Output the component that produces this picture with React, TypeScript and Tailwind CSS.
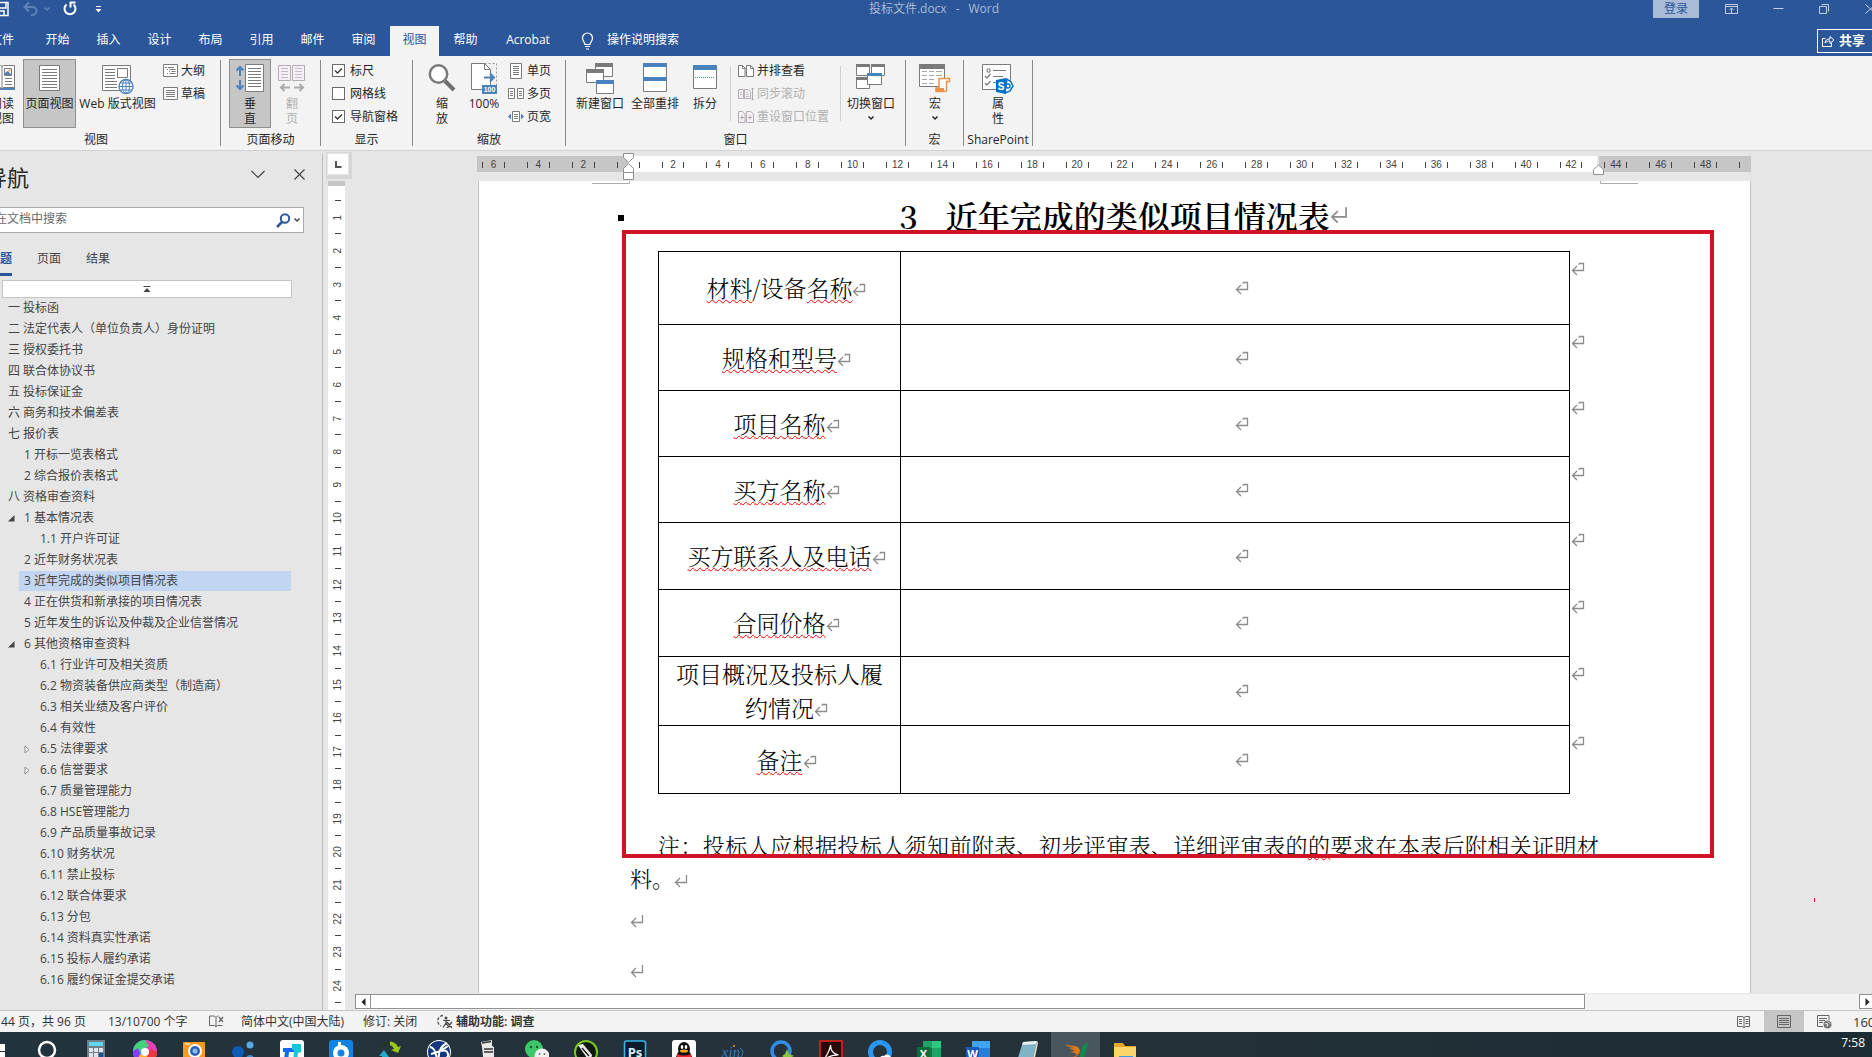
import React from "react";
import type { ReactNode } from "react";

const UI = "font-['Open_Sans','Noto_Sans_CJK_SC',sans-serif]";
const DOC = "font-['Noto_Serif_CJK_SC','Liberation_Serif','Noto_Sans_CJK_SC',serif]";

/* ---------- small shared glyphs ---------- */

function Chevron({ className = "" }: { className?: string }) {
  return (
    <svg width="8" height="6" viewBox="0 0 8 6" className={className} aria-hidden="true">
      <path d="M1.5 1.5L4 4l2.5-2.5" fill="none" stroke="currentColor" strokeWidth="1.5" />
    </svg>
  );
}

function CellMark({ className = "" }: { className?: string }) {
  return (
    <svg width="14" height="14" viewBox="0 0 14 14" className={className} aria-hidden="true">
      <path d="M8 1.5h4.500v7H2M6 4L1.500 8.500 6 13" fill="none" stroke="#8c8c8c" strokeWidth="1.300" />
      <path d="M8 1.500v1.500" stroke="#8c8c8c" strokeWidth="1" />
    </svg>
  );
}

function ParaMark({ size = 14 }: { size?: number }) {
  return (
    <svg width={size} height={size} viewBox="0 0 14 14" className="inline-block" aria-hidden="true">
      <path d="M12.500 1v7.500H2M6 4L1.500 8.500 6 13" fill="none" stroke="#8c8c8c" strokeWidth="1.300" />
    </svg>
  );
}

/* ---------- ribbon icons ---------- */

const G = "#7a7a7a";
const B = "#4a82bd";

const IconRead = () => (
  <svg width="30" height="32" viewBox="0 0 30 32" aria-hidden="true">
    <path d="M3 4h25v23H3z" fill={B} />
    <path d="M1.500 2.500h12l1.500 1 1.500-1h11v22h-11l-1.500 1.500-1.500-1.500h-12z" fill="#fff" stroke={G} />
    <path d="M17.500 5.500h7v7h-7z" fill="#fff" stroke={G} />
    <path d="M18 12v-2l2.500-2 3.500 3v1z" fill={B} />
    <circle cx="22.500" cy="7.500" r="1" fill="#e8914a" />
    <path d="M15 3v22M18 15.500h7M18 18.500h7M18 21.500h7" stroke={G} />
  </svg>
);

const IconPage = () => (
  <svg width="22" height="32" viewBox="0 0 22 32" aria-hidden="true">
    <path d="M.5 2.500h20v25H.5z" fill="#fff" stroke={G} />
    <path d="M3 6.500h15M3 9.500h15M3 12.500h15M3 15.500h15M3 18.500h15M3 21.500h15M3 24.500h15" stroke={G} />
  </svg>
);

const IconWeb = () => (
  <svg width="32" height="32" viewBox="0 0 32 32" aria-hidden="true">
    <path d="M.5 2.500h28v25H.5z" fill="#fff" stroke={G} />
    <path d="M15.500 5.500h10v9h-10z" fill="#fff" stroke={G} />
    <path d="M3 6.500h10M3 9.500h10M3 12.500h10M3 15.500h10M3 18.500h12M3 21.500h12M3 24.500h12" stroke={G} />
    <circle cx="24" cy="23.500" r="7" fill="#fff" stroke={B} strokeWidth="1.300" />
    <path d="M17 23.500h14M24 16.500v14M18 20h12M18 27h12" stroke={B} strokeWidth="1" />
    <ellipse cx="24" cy="23.500" rx="3.500" ry="7" fill="none" stroke={B} />
  </svg>
);

const IconOutline = () => (
  <svg width="15" height="14" viewBox="0 0 15 14" aria-hidden="true">
    <path d="M.5.5h14v12H.5z" fill="#fff" stroke={G} />
    <path d="M2 3.500h2M5 3.500h6M4 5.500h1M6.500 5.500h6M6 7.500h1M8.500 7.500h4M4 9.500h1M6.500 9.500h6" stroke={G} />
  </svg>
);

const IconDraft = () => (
  <svg width="15" height="14" viewBox="0 0 15 14" aria-hidden="true">
    <path d="M.5.5h14v12H.5z" fill="#fff" stroke={G} />
    <path d="M3 3.500h9M3 5.500h9M3 7.500h9M3 9.500h9" stroke={G} />
  </svg>
);

const IconVertical = () => (
  <svg width="30" height="32" viewBox="0 0 30 32" aria-hidden="true">
    <path d="M10.500 1.500h18v27h-18z" fill="#fff" stroke={G} />
    <path d="M13 5.500h13M13 8.500h13M13 11.500h13M13 14.500h13M13 17.500h13M13 20.500h13M13 23.500h13" stroke={G} />
    <path d="M5 4v9M1.500 7.500L5 4l3.500 3.500M5 17v9M1.500 22.500L5 26l3.500-3.500" fill="none" stroke={B} strokeWidth="2" />
  </svg>
);

const IconFlip = () => (
  <svg width="28" height="32" viewBox="0 0 28 32" aria-hidden="true">
    <path d="M.5 2.500h12v15H.5zM14.500 2.500h12v15h-12z" fill="#f5f0f5" stroke="#b5abb5" />
    <path d="M3 5.500h7M3 8.500h7M3 11.500h7M3 14.500h7M17 5.500h7M17 8.500h7M17 11.500h7M17 14.500h7" stroke="#c4bcc4" />
    <path d="M12 24.500H3M6.500 21L3 24.500 6.500 28M16 24.500h9M21.500 21l3.500 3.500-3.500 3.500" fill="none" stroke="#aaa" strokeWidth="2" />
  </svg>
);

const IconZoom = () => (
  <svg width="28" height="32" viewBox="0 0 28 32" aria-hidden="true">
    <path d="M17 18l9 9" stroke="#6f6f6f" strokeWidth="4" />
    <circle cx="10.500" cy="11" r="8.700" fill="#fff" stroke={G} strokeWidth="2.500" />
  </svg>
);

const IconHundred = () => (
  <svg width="28" height="32" viewBox="0 0 28 32" aria-hidden="true">
    <path d="M1.500.5h13l6 6v20h-19z" fill="#fff" stroke={G} />
    <path d="M14.500.500h12v22" fill="none" stroke="#999" strokeDasharray="2 2" />
    <path d="M14.500.5v6h6" fill="none" stroke={G} />
    <path d="M14 14.500h10M20 10.500l4 4-4 4" fill="none" stroke={B} strokeWidth="2" />
    <path d="M12 22h15v9H12z" fill={B} />
    <text x="19.500" y="29" textAnchor="middle" fontSize="7" fontWeight="700" fill="#fff" fontFamily="Liberation Sans">100</text>
  </svg>
);

const IconOne = () => (
  <svg width="16" height="16" viewBox="0 0 16 16" aria-hidden="true">
    <path d="M2.500.5h11v15h-11z" fill="#fff" stroke={G} />
    <path d="M5 3.500h6M5 5.500h6M5 7.500h6M5 9.500h6M5 11.500h6" stroke={G} />
  </svg>
);

const IconMany = () => (
  <svg width="16" height="16" viewBox="0 0 16 16" aria-hidden="true">
    <path d="M.5 2.500h6v10h-6zM9.500 2.500h6v10h-6z" fill="#fff" stroke={G} />
    <path d="M2 5.500h3M2 7.500h3M2 9.500h3M11 5.500h3M11 7.500h3M11 9.500h3" stroke={G} />
  </svg>
);

const IconWidth = () => (
  <svg width="16" height="16" viewBox="0 0 16 16" aria-hidden="true">
    <path d="M4.500 2.500h7v10h-7z" fill="#fff" stroke={G} />
    <path d="M6 5.500h4M6 7.500h4M6 9.500h4" stroke={G} />
    <path d="M3 4.500v6l-3-3zM13 4.500v6l3-3z" fill={B} />
  </svg>
);

const IconNewWin = () => (
  <svg width="28" height="32" viewBox="0 0 28 32" aria-hidden="true">
    <path d="M9.500.5h17v13h-17z" fill="#fff" stroke={G} />
    <path d="M9 0h18v4H9z" fill={G} />
    <path d="M.5 6.500h17v13H.5z" fill="#fff" stroke={G} />
    <path d="M0 6h18v4H0z" fill={G} />
    <path d="M10.500 17.500h17v13h-17z" fill="#fff" stroke={G} />
    <path d="M10 17h18v4H10z" fill={B} />
  </svg>
);

const IconArrange = () => (
  <svg width="24" height="32" viewBox="0 0 24 32" aria-hidden="true">
    <path d="M.5.5h23v28H.500z" fill="#fff" stroke={G} />
    <path d="M0 0h24v4H0zM0 14h24v4H0z" fill={B} />
  </svg>
);

const IconSplit = () => (
  <svg width="24" height="32" viewBox="0 0 24 32" aria-hidden="true">
    <path d="M.5 2.500h23v23H.5z" fill="#fff" stroke={G} />
    <path d="M0 2h24v5H0z" fill={B} />
    <path d="M2 14.500h20" stroke={B} strokeDasharray="1 1" />
  </svg>
);

const IconSide = () => (
  <svg width="16" height="14" viewBox="0 0 16 14" aria-hidden="true">
    <path d="M.5 1.500h4l2.500 2.500v8.500H.5zM8.500 1.500h4L15.500 4v8.500h-7z" fill="#fff" stroke={G} />
    <path d="M4.500 1.500v3h2.500M12.500 1.500v3h3" fill="none" stroke={G} />
  </svg>
);

const IconSync = () => (
  <svg width="16" height="14" viewBox="0 0 16 14" aria-hidden="true">
    <path d="M.5 2.500h5v9h-5zM6.500 2.500h4l2 2v7h-6z" fill="#f5f0f5" stroke="#b5abb5" />
    <path d="M2 5.500h2M2 7.500h2M8 5.500h2M8 7.500h3M8 9.500h3" stroke="#c4bcc4" />
    <path d="M14.500 1v12M13 2.500L14.500 1 16 2.500M13 11.500l1.500 1.500 1.500-1.500" fill="none" stroke="#aaa" />
  </svg>
);

const IconReset = () => (
  <svg width="16" height="14" viewBox="0 0 16 14" aria-hidden="true">
    <path d="M.5 1.500h4l2.500 2.500v8.500H.5zM8.500 1.500h4L15.500 4v8.500h-7z" fill="#f5f0f5" stroke="#b5abb5" />
    <path d="M2 7.500h4M4 5.500v4M10 7.500h4M12 5.500v4" stroke="#aaa" />
  </svg>
);

const IconSwitch = () => (
  <svg width="30" height="32" viewBox="0 0 30 32" aria-hidden="true">
    <path d="M.5 1.500h13v11H.5zM15.500 1.500h13v11h-13zM.5 14.500h13v11H.5z" fill="#fff" stroke={G} />
    <path d="M0 1h14v3H0zM15 1h14v3H15zM0 14h14v3H0z" fill={G} />
    <path d="M11.500 10.500h14v11h-14z" fill="#fff" stroke={G} />
    <path d="M11 10h15v3H11z" fill={B} />
  </svg>
);

const IconMacro = () => (
  <svg width="32" height="32" viewBox="0 0 32 32" aria-hidden="true">
    <path d="M.5 1.500h25v22H.5z" fill="#fff" stroke={G} />
    <path d="M0 1h26v5H0z" fill={G} />
    <path d="M3 8.500h5M10 8.500h5M17 8.500h6M3 12.500h5M10 12.500h5M17 12.500h6M3 16.500h5M10 16.500h5M3 20.500h5M10 20.500h5" stroke="#a8a8a8" />
    <path d="M20 15.500h10.500v3h-3V27a1.500 1.500 0 0 1-1.500 1.500h-9V25h3z" fill="#fff" stroke="#e8914a" strokeWidth="1.500" />
    <path d="M17 25h8v3h-8z" fill="#e8914a" />
  </svg>
);

const IconProps = () => (
  <svg width="32" height="32" viewBox="0 0 32 32" aria-hidden="true">
    <path d="M.5 1.500h28v25H.5z" fill="#fff" stroke={G} />
    <path d="M5 6h3v3H5z" fill="none" stroke={G} />
    <path d="M11 7.500h13M11 13.500h10M3 13l2 2 3.500-4M3 20l2 2 3.500-4M11 19.500h4" fill="none" stroke={G} strokeWidth="1.200" />
    <path d="M25 16l4 3 2 4-3 5-5 2z" fill="#fff" stroke="#0072c6" strokeWidth="1.500" />
    <circle cx="26" cy="23" r="2" fill="#fff" stroke="#0072c6" strokeWidth="1.500" />
    <path d="M14 17l10-2v16l-10-2z" fill="#0072c6" />
    <text x="19" y="26.500" textAnchor="middle" fontSize="10" fontWeight="700" fill="#fff" fontFamily="Liberation Sans">S</text>
  </svg>
);

/* ---------- ribbon building blocks ---------- */

function BigButton({ icon, label, className, active, disabled, menu }: {
  icon: ReactNode; label: ReactNode; className: string; active?: boolean; disabled?: boolean; menu?: boolean;
}) {
  const state = active ? "border-[#8f8f8f] bg-[#c6c6c6]" : "border-transparent";
  return (
    <button
      type="button"
      disabled={disabled}
      className={`flex h-[69px] shrink-0 flex-col items-center border pt-[3px] leading-[15px] whitespace-nowrap ${state} ${disabled ? "text-[#b1b1b1]" : ""} ${className}`}
    >
      <span className="mb-px flex h-8 items-start">{icon}</span>
      <span>{label}</span>
      {menu && <Chevron className="mt-1" />}
    </button>
  );
}

function SmallButton({ icon, label, disabled }: { icon: ReactNode; label: string; disabled?: boolean }) {
  return (
    <button type="button" disabled={disabled} className={`flex h-[23px] items-center gap-[3px] whitespace-nowrap ${disabled ? "text-[#b1b1b1]" : ""}`}>
      {icon}
      <span>{label}</span>
    </button>
  );
}

function Check({ label, on }: { label: string; on?: boolean }) {
  return (
    <label className="flex h-[23px] items-center gap-[5px] whitespace-nowrap">
      <span className="relative flex size-[13px]">
        <input type="checkbox" defaultChecked={on} className="peer size-[13px] appearance-none border border-[#6a6a6a] bg-white" />
        <svg viewBox="0 0 13 13" className="pointer-events-none absolute inset-0 hidden peer-checked:block" aria-hidden="true">
          <path d="M3 6.500l2.500 2.500L10 4.500" fill="none" stroke="#333" strokeWidth="1.300" />
        </svg>
      </span>
      {label}
    </label>
  );
}

function Group({ label, className, children }: { label: string; className: string; children: ReactNode }) {
  return (
    <>
      <section aria-label={label} className={`shrink-0 pt-[3px] ${className}`}>
        <div className="flex h-[69px]">{children}</div>
        <div className="mt-[3px] text-center leading-[18px] whitespace-nowrap">{label}</div>
      </section>
      <div className="my-1 w-px shrink-0 bg-[#8a8a8a]" />
    </>
  );
}

const tabs = ["开始", "插入", "设计", "布局", "引用", "邮件", "审阅", "视图", "帮助", "Acrobat"];

function TitleArea() {
  return (
    <header className="h-14 shrink-0 bg-[#2b579a] text-white">
      <div className="grid h-[18px] grid-cols-[1fr_auto_1fr]">
        <div className="flex items-center">
          <button type="button" aria-label="保存" className="-ml-[5px]">
            <svg width="14" height="18" viewBox="0 0 14 18"><path d="M1 2.500h12v13H1zM3 3v5h8V3M4 15v-4h5v4" fill="none" stroke="#fff" strokeWidth="1.500" /></svg>
          </button>
          <button type="button" aria-label="撤消" className="ml-[14px]">
            <svg width="16" height="18" viewBox="0 0 16 18"><path d="M2 7h7.500a4 4 0 0 1 0 8H8M6 2.500L1.500 7 6 11.500" fill="none" stroke="#5f82b8" strokeWidth="2" /></svg>
          </button>
          <Chevron className="ml-1 text-[#5f82b8]" />
          <button type="button" aria-label="重复" className="ml-[11px]">
            <svg width="16" height="18" viewBox="0 0 16 18"><path d="M4.500 4.500a5.500 5.500 0 1 0 7 0M8 2.500h5.500M8.500 2v5.500" fill="none" stroke="#fff" strokeWidth="2" /></svg>
          </button>
          <button type="button" aria-label="自定义快速访问工具栏" className="ml-[17px]">
            <svg width="7" height="18" viewBox="0 0 7 18"><path d="M1 6.500h5" stroke="#fff" /><path d="M.5 9h6l-3 3.500z" fill="#fff" /></svg>
          </button>
        </div>
        <div className="flex gap-[9px] pr-1 leading-[18px] text-[#a9b9d4]">
          <span>投标文件.docx</span>
          <span>-</span>
          <span>Word</span>
        </div>
        <div className="flex justify-end text-[#c0cce0]">
          <button type="button" className="mr-[26px] h-[18px] w-[46px] rounded-b-[1px] bg-[#a9bbd6] leading-[18px] text-[#2b579a]">登录</button>
          <button type="button" aria-label="功能区显示选项" className="mr-[34px]">
            <svg width="14" height="12" viewBox="0 0 14 12"><path d="M.5 1.500h12v9H.5zM.500 3.500h12M6.500 10V5M4.500 7l2-2 2 2" fill="none" stroke="currentColor" /></svg>
          </button>
          <button type="button" aria-label="最小化" className="mr-[35px]">
            <svg width="11" height="12" viewBox="0 0 11 12"><path d="M.5 5.500h10" stroke="currentColor" /></svg>
          </button>
          <button type="button" aria-label="还原" className="mr-[35px]">
            <svg width="11" height="12" viewBox="0 0 11 12"><path d="M.500 3.500h7v7h-7zM2.500 1.500h7v7" fill="none" stroke="currentColor" /></svg>
          </button>
          <button type="button" aria-label="关闭" className="-mr-1">
            <svg width="11" height="12" viewBox="0 0 11 12"><path d="M.500 1.500l10 9M10.500 1.500l-10 9" stroke="currentColor" /></svg>
          </button>
        </div>
      </div>
      <div className="flex h-[38px] items-end">
        <button type="button" className="mr-[6px] -ml-[23px] h-[30px] w-[50px] pb-[3px]">文件</button>
        <nav className="flex gap-[2px]">
          {tabs.map((t) => (
            <button key={t} type="button" className={`flex h-[30px] items-center justify-center pb-[3px] ${t === "Acrobat" ? "w-[72px]" : "w-[49px]"} ${t === "视图" ? "bg-[#f3f3f3] text-[#2b579a]" : ""}`}>
              {t}
            </button>
          ))}
        </nav>
        <button type="button" className="ml-[17px] flex h-[30px] items-center gap-[13px] pb-[3px]">
          <svg width="13" height="18" viewBox="0 0 13 18" className="mt-[3px]" aria-hidden="true">
            <path d="M4 12.500c0-2-2.500-3-2.500-6.500a5 5 0 0 1 10 0c0 3.500-2.500 4.500-2.500 6.500zM4 14.500h5M5 17h3" fill="none" stroke="#fff" strokeWidth="1.200" />
          </svg>
          操作说明搜索
        </button>
        <button type="button" className="-mr-3 mb-[3px] ml-auto flex h-6 w-[67px] items-center gap-1 border border-white pl-1 font-bold">
          <svg width="13" height="14" viewBox="0 0 13 14" aria-hidden="true"><path d="M3.500 4.500h-3v8h9V9M3 9c.500-3 2-4 5-4V2.500L12 6 8 9.500V7C6 7 4.500 7.500 3 9z" fill="none" stroke="#fff" /></svg>
          <span className="pb-[3px] text-[13px]">共享</span>
          <Chevron className="ml-[2px]" />
        </button>
      </div>
    </header>
  );
}

function Ribbon() {
  return (
    <div className="flex h-[95px] shrink-0 border-b border-[#d2d2d2] bg-[#f3f3f3] text-[#262626]">
      <Group label="视图" className="-ml-[28px] w-[248px]">
        <BigButton icon={<IconRead />} label={<>阅读<br />视图</>} className="ml-[10px] w-10" />
        <BigButton icon={<IconPage />} label="页面视图" active className="ml-px w-[53px]" />
        <BigButton icon={<IconWeb />} label="Web 版式视图" className="ml-px w-[81px]" />
        <div className="ml-[5px] flex flex-col">
          <SmallButton icon={<IconOutline />} label="大纲" />
          <SmallButton icon={<IconDraft />} label="草稿" />
        </div>
      </Group>
      <Group label="页面移动" className="w-[99px]">
        <BigButton icon={<IconVertical />} label={<>垂<br />直</>} active className="ml-2 w-[42px]" />
        <BigButton icon={<IconFlip />} label={<>翻<br />页</>} disabled className="ml-1 w-[34px]" />
      </Group>
      <Group label="显示" className="w-[91px]">
        <div className="ml-[11px] flex flex-col">
          <Check label="标尺" on />
          <Check label="网格线" />
          <Check label="导航窗格" on />
        </div>
      </Group>
      <Group label="缩放" className="w-[152px]">
        <BigButton icon={<IconZoom />} label={<>缩<br />放</>} className="ml-3 w-[34px]" />
        <BigButton icon={<IconHundred />} label="100%" className="ml-[5px] w-10" />
        <div className="ml-1 flex flex-col">
          <SmallButton icon={<IconOne />} label="单页" />
          <SmallButton icon={<IconMany />} label="多页" />
          <SmallButton icon={<IconWidth />} label="页宽" />
        </div>
      </Group>
      <Group label="窗口" className="w-[339px]">
        <BigButton icon={<IconNewWin />} label="新建窗口" className="ml-[7px] w-[54px]" />
        <BigButton icon={<IconArrange />} label="全部重排" className="ml-px w-[54px]" />
        <BigButton icon={<IconSplit />} label="拆分" className="ml-[3px] w-10" />
        <div className="my-[7px] ml-[5px] w-px bg-[#d0d0d0]" />
        <div className="ml-[7px] flex w-[102px] flex-col">
          <SmallButton icon={<IconSide />} label="并排查看" />
          <SmallButton icon={<IconSync />} label="同步滚动" disabled />
          <SmallButton icon={<IconReset />} label="重设窗口位置" disabled />
        </div>
        <div className="my-[7px] w-px bg-[#d0d0d0]" />
        <BigButton icon={<IconSwitch />} label="切换窗口" menu className="ml-[3px] w-[54px]" />
      </Group>
      <Group label="宏" className="w-[57px]">
        <BigButton icon={<IconMacro />} label="宏" menu className="ml-3 w-[34px]" />
      </Group>
      <Group label="SharePoint" className="w-[68px]">
        <BigButton icon={<IconProps />} label={<>属<br />性</>} className="ml-[17px] w-[34px]" />
      </Group>
    </div>
  );
}

/* ---------- navigation pane ---------- */

type Item = { level: 1 | 2 | 3; text: string; open?: boolean; closed?: boolean; selected?: boolean };

const outline: Item[] = [
  { level: 1, text: "一 投标函" },
  { level: 1, text: "二 法定代表人（单位负责人）身份证明" },
  { level: 1, text: "三 授权委托书" },
  { level: 1, text: "四 联合体协议书" },
  { level: 1, text: "五 投标保证金" },
  { level: 1, text: "六 商务和技术偏差表" },
  { level: 1, text: "七 报价表" },
  { level: 2, text: "1 开标一览表格式" },
  { level: 2, text: "2 综合报价表格式" },
  { level: 1, text: "八 资格审查资料" },
  { level: 2, text: "1 基本情况表", open: true },
  { level: 3, text: "1.1 开户许可证" },
  { level: 2, text: "2 近年财务状况表" },
  { level: 2, text: "3 近年完成的类似项目情况表", selected: true },
  { level: 2, text: "4 正在供货和新承接的项目情况表" },
  { level: 2, text: "5 近年发生的诉讼及仲裁及企业信誉情况" },
  { level: 2, text: "6 其他资格审查资料", open: true },
  { level: 3, text: "6.1 行业许可及相关资质" },
  { level: 3, text: "6.2 物资装备供应商类型（制造商）" },
  { level: 3, text: "6.3 相关业绩及客户评价" },
  { level: 3, text: "6.4 有效性" },
  { level: 3, text: "6.5 法律要求", closed: true },
  { level: 3, text: "6.6 信誉要求", closed: true },
  { level: 3, text: "6.7 质量管理能力" },
  { level: 3, text: "6.8 HSE管理能力" },
  { level: 3, text: "6.9 产品质量事故记录" },
  { level: 3, text: "6.10 财务状况" },
  { level: 3, text: "6.11 禁止投标" },
  { level: 3, text: "6.12 联合体要求" },
  { level: 3, text: "6.13 分包" },
  { level: 3, text: "6.14 资料真实性承诺" },
  { level: 3, text: "6.15 投标人履约承诺" },
  { level: 3, text: "6.16 履约保证金提交承诺" },
];

const indent = { 1: "ml-0 pl-2", 2: "ml-[3px] pl-[5px]", 3: "ml-[19px] pl-[5px]" };

function OutlineRow({ item }: { item: Item }) {
  return (
    <li className={`flex h-[21px] ${indent[item.level]}`}>
      {item.level > 1 && (
        <span className="flex w-[11px] shrink-0 items-center">
          {item.open && <svg width="7" height="7" viewBox="0 0 7 7" aria-hidden="true"><path d="M6.500 0v6.500H0z" fill="#444" /></svg>}
          {item.closed && <svg width="6" height="9" viewBox="0 0 6 9" aria-hidden="true"><path d="M1 1v7l4-3.500z" fill="#fff" stroke="#8a8a8a" /></svg>}
        </span>
      )}
      <button
        type="button"
        className={`mb-px h-5 text-left leading-5 whitespace-nowrap ${item.level > 1 ? "pl-[5px]" : ""} ${item.selected ? "mr-[31px] grow bg-[#c2d5f2]" : ""}`}
      >
        {item.text}
      </button>
    </li>
  );
}

function NavPane() {
  return (
    <aside className="mt-[2px] flex w-[323px] shrink-0 flex-col overflow-hidden border-r border-[#bdbdbd] text-[#444]">
      <div className="mt-2 flex h-8 items-center">
        <h2 className="-ml-[15px] text-[22px] leading-8 text-[#262626]">导航</h2>
        <button type="button" aria-label="任务窗格选项" className="mb-[6px] ml-auto">
          <svg width="14" height="9" viewBox="0 0 14 9"><path d="M.500 1l6.500 6.500L13.500 1" fill="none" stroke="#444" strokeWidth="1.200" /></svg>
        </button>
        <button type="button" aria-label="关闭" className="mr-[17px] mb-[6px] ml-[29px]">
          <svg width="11" height="11" viewBox="0 0 11 11"><path d="M.500.500l10 10M10.500.500l-10 10" stroke="#444" strokeWidth="1.200" /></svg>
        </button>
      </div>
      <div className="mt-[14px] mr-[18px] -ml-[10px] flex h-[26px] shrink-0 items-center border border-[#ababab] bg-white">
        <input type="text" aria-label="在文档中搜索" placeholder="在文档中搜索" className="h-6 min-w-0 grow pb-[3px] pl-1 placeholder:text-[#6a6a6a]" />
        <svg width="15" height="15" viewBox="0 0 15 15" aria-hidden="true">
          <path d="M6 9L1 14" stroke="#2b579a" strokeWidth="2.500" />
          <circle cx="9" cy="5.500" r="4.200" fill="none" stroke="#2b579a" strokeWidth="2" />
        </svg>
        <Chevron className="mr-[2px] ml-[2px]" />
      </div>
      <div className="mt-[14px] flex h-7 shrink-0 gap-[25px]">
        <button type="button" className="-ml-3 h-[29px] border-b-[3px] border-[#2b579a] pb-[2px] leading-6 font-semibold text-[#2b579a]">标题</button>
        <button type="button" className="h-6 leading-6">页面</button>
        <button type="button" className="h-6 leading-6">结果</button>
      </div>
      <button type="button" aria-label="跳转到开头" className="mt-[5px] ml-[2px] flex h-[18px] w-[290px] shrink-0 items-center justify-center border border-[#c4c4c4] bg-white">
        <svg width="8" height="7" viewBox="0 0 8 7"><path d="M.500.500h7" stroke="#444" /><path d="M4 2l3.500 4h-7z" fill="#444" /></svg>
      </button>
      <ul className="shrink-0">
        {outline.map((o) => <OutlineRow key={o.text} item={o} />)}
      </ul>
    </aside>
  );
}

/* ---------- rulers ---------- */

const hCells = Array.from({ length: 29 }, (_, i) => (i - 3) * 2);
const vCells = Array.from({ length: 24 }, (_, i) => i + 1);

function HorizontalRuler() {
  return (
    <div className="relative mt-[5px] ml-[154px] h-4 w-[1274px] shrink-0">
      <div className="flex h-4 overflow-hidden bg-white">
        <div className="w-[151px] shrink-0 bg-[#c6c6c6]" />
        <div className="grow" />
        <div className="w-[154px] shrink-0 border-l-2 border-[#e6e6e6] bg-[#c6c6c6]" />
      </div>
      <div className="absolute inset-0 overflow-hidden">
        <div className="-ml-[6px] grid h-[18px] w-[1302px] grid-cols-[repeat(29,1fr)] font-['Liberation_Sans',sans-serif] text-[10px] text-[#444]">
          {hCells.map((n) => (
            <div key={n} className="flex items-center justify-between px-[11px]">
              <span className="h-[6px] w-px bg-[#444]" />
              <span className="w-3 text-center leading-[18px]">{n === 0 || n === 50 ? "" : Math.abs(n)}</span>
              <span className="h-[6px] w-px bg-[#444]" />
            </div>
          ))}
        </div>
      </div>
      <svg width="12" height="30" viewBox="0 0 12 30" className="absolute -top-[4px] left-[146px]" aria-hidden="true">
        <path d="M.500 1.500h10v4l-5 5-5-5zM5.500 11.500l5 5v4H.500v-4zM.500 20.500h10v7H.500z" fill="#fff" stroke="#8f8f8f" />
      </svg>
      <svg width="12" height="12" viewBox="0 0 12 12" className="absolute top-[8px] left-[1116px]" aria-hidden="true">
        <path d="M.500 10.500v-5l5-4.500 5 4.500v5z" fill="#fff" stroke="#8f8f8f" />
      </svg>
    </div>
  );
}

function VerticalRuler() {
  return (
    <div className="ml-[5px] w-[17px] shrink-0 overflow-hidden bg-white">
      <div className="h-[5px] bg-[#c6c6c6]" />
      <div className="mt-[14px] grid h-[802px] grid-rows-[repeat(24,1fr)] pl-[2px] font-['Liberation_Sans',sans-serif] text-[10px] text-[#444]">
        {vCells.map((n) => (
          <div key={n} className="flex flex-col items-center">
            <span className="h-px w-[6px] shrink-0 bg-[#444]" />
            <span className="flex grow rotate-180 items-center justify-center leading-4 [writing-mode:vertical-rl]">{n}</span>
          </div>
        ))}
      </div>
      <div className="ml-[7px] h-px w-[6px] bg-[#444]" />
    </div>
  );
}

/* ---------- document ---------- */

const wavy = "underline decoration-[#ff0000] decoration-wavy decoration-1 underline-offset-[2px]";

const rows: { label: ReactNode; h: string }[] = [
  { label: <><span className={wavy}>材料</span>/设备<span className={wavy}>名称</span></>, h: "h-[73px]" },
  { label: <span className={wavy}>规格和型号</span>, h: "h-[66px]" },
  { label: <span className={wavy}>项目名称</span>, h: "h-[66px]" },
  { label: <span className={wavy}>买方名称</span>, h: "h-[66px]" },
  { label: <span className={wavy}>买方联系人及电话</span>, h: "h-[67px]" },
  { label: <span className={wavy}>合同价格</span>, h: "h-[67px]" },
  { label: "项目概况及投标人履约情况", h: "h-[69px]" },
  { label: <span className={wavy}>备注</span>, h: "h-[68px]" },
];

function Page() {
  return (
    <article className={`relative ml-[123px] h-full w-[1273px] shrink-0 border-x border-[#c4c4c4] bg-white pl-[151px] text-black ${DOC}`}>
      <svg width="38" height="4" viewBox="0 0 38 4" className="absolute top-0 left-[113px]" aria-hidden="true"><path d="M0 2.500h37.500V0" fill="none" stroke="#ababab" /></svg>
      <svg width="38" height="4" viewBox="0 0 38 4" className="absolute top-0 left-[1121px]" aria-hidden="true"><path d="M38 2.500H.500V0" fill="none" stroke="#ababab" /></svg>
      <div className="absolute top-[34px] left-[139px] h-[6px] w-[6px] bg-black" />

      <h1 className="mr-[151px] flex items-center justify-center pt-3 pl-[18px] text-[32px] leading-[44px] font-semibold">
        <span className="mr-[28px]">3</span>
        <span>近年完成的类似项目情况表</span>
        <ParaMark size={18} />
      </h1>

      <table className="mt-[14px] ml-[28px] w-[932px] table-fixed border-collapse text-[23px] leading-[34px] font-light">
        <colgroup>
          <col className="w-[242px]" />
          <col className="w-[669px]" />
          <col />
        </colgroup>
        <tbody>
          {rows.map((r, i) => (
            <tr key={i} className={r.h}>
              <th scope="row" className="border border-black px-3 text-center align-middle font-light">
                {r.label}<CellMark className="-mr-[14px] mb-[2px] inline-block" />
              </th>
              <td className="border border-black p-0 align-middle"><CellMark className="mx-auto translate-x-[7px]" /></td>
              <td className="p-0 pt-[10px] align-top"><CellMark className="ml-px" /></td>
            </tr>
          ))}
        </tbody>
      </table>

      <p className="mt-[34px] w-[969px] text-justify indent-[28px] text-[22px] leading-[33px] font-light">
        注：投标人应根据投标人须知前附表、初步评审表、详细评审表的<span className={wavy}>的</span>要求在本表后附相关证明材料。<ParaMark />
      </p>
      <p className="mt-[9px] leading-[32px]"><ParaMark /></p>
      <p className="mt-[18px] leading-[32px]"><ParaMark /></p>

      <div className="pointer-events-none absolute top-[49px] left-[143px] h-[628px] w-[1092px] border-4 border-[#d01424]" />
      <div className="absolute top-[717px] left-[1335px] h-1 w-px bg-[#d01424]" />
    </article>
  );
}

function Editor() {
  return (
    <main className="flex min-w-0 grow flex-col">
      <div className="flex h-[30px] shrink-0">
        <div className="mt-px ml-[3px] -mr-[29px] flex h-[27px] w-[26px] shrink-0 bg-[#d6d6d6] p-[1px]">
          <button type="button" aria-label="制表符" className="flex h-[22px] w-[22px] items-center justify-center border border-[#e6e6e6] bg-[#fdfdfd]">
            <svg width="7" height="7" viewBox="0 0 7 7"><path d="M1 0v6h5.500" fill="none" stroke="#555" strokeWidth="2" /></svg>
          </button>
        </div>
        <HorizontalRuler />
      </div>
      <div className="flex min-h-0 grow">
        <VerticalRuler />
        <div className="ml-[10px] flex min-w-0 grow flex-col">
          <div className="min-h-0 grow overflow-hidden"><Page /></div>
          <div className="mt-px flex h-4 shrink-0 overflow-hidden bg-[#f3f3f3] pb-px">
            <button type="button" aria-label="向左滚动" className="flex w-4 items-center justify-center border border-[#919191] bg-white">
              <svg width="5" height="8" viewBox="0 0 5 8"><path d="M4.500 0v8L.500 4z" fill="#222" /></svg>
            </button>
            <div className="-ml-px flex-[1215] border border-[#919191] bg-white" />
            <div className="flex-[274]" />
            <button type="button" aria-label="向右滚动" className="-mr-[3px] flex w-4 items-center justify-center border border-[#919191] bg-white">
              <svg width="5" height="8" viewBox="0 0 5 8"><path d="M.500 0v8l4-4z" fill="#222" /></svg>
            </button>
          </div>
        </div>
      </div>
    </main>
  );
}

/* ---------- status bar ---------- */

function StatusBar() {
  return (
    <footer className="flex h-[22px] shrink-0 items-center overflow-hidden border-t border-[#c6c6c6] bg-[#f3f3f3] whitespace-nowrap text-[#333]">
      <span className="-ml-[14px] w-[122px]">第 44 页，共 96 页</span>
      <span className="w-[101px]">13/10700 个字</span>
      <svg width="15" height="13" viewBox="0 0 15 13" className="mr-[17px] shrink-0" aria-hidden="true">
        <path d="M7 2.500L5.500 1H.500v9.500h5L7 12l1.500-1.500h5M7 2.500V12M7 2.500L8.500 1h1" fill="none" stroke="#666" />
        <path d="M10 2l4 5M14 2l-4 5" stroke="#666" strokeWidth="1.300" />
      </svg>
      <span className="w-[122px]">简体中文(中国大陆)</span>
      <span className="w-[74px]">修订: 关闭</span>
      <svg width="16" height="15" viewBox="0 0 16 15" className="mr-[3px] shrink-0" aria-hidden="true">
        <path d="M6 1.500a5.500 5.500 0 0 0-2 10.500" fill="none" stroke="#555" strokeDasharray="3 1.500" strokeWidth="1.300" />
        <circle cx="9" cy="4" r="1.500" fill="#444" />
        <path d="M6 6.500h7M9 6v3l-3 4.500M9 9l3 4.500M10 8l5 6M15 8l-5 6" fill="none" stroke="#444" strokeWidth="1.200" />
      </svg>
      <span className="font-semibold">辅助功能: 调查</span>
      <div className="ml-auto flex h-full items-center">
        <button type="button" aria-label="阅读视图" className="mr-[13px]">
          <svg width="14" height="14" viewBox="0 0 14 14"><path d="M.500 1.500h5l1.500 1 1.500-1h4v10h-4L7 13l-1.500-1.500h-5zM7 2v11M2 4.500h3M2 6.500h3M2 8.500h3M8.500 4.500h3M8.500 6.500h3M8.500 8.500h3" fill="none" stroke="#666" /></svg>
        </button>
        <button type="button" aria-label="页面视图" className="flex h-full w-10 items-center justify-center bg-[#c6c6c6]">
          <svg width="14" height="14" viewBox="0 0 14 14"><path d="M.500.500h13v12H.500zM2 3.500h10M2 5.500h10M2 7.500h10M2 9.500h10" fill="none" stroke="#666" /></svg>
        </button>
        <button type="button" aria-label="Web 版式视图" className="mr-[21px] ml-[13px]">
          <svg width="15" height="14" viewBox="0 0 15 14"><path d="M12 5V.500H.500v11H6M2 3.500h8M2 5.500h6M2 7.500h4" fill="none" stroke="#666" /><circle cx="10.500" cy="9.500" r="4" fill="#777" /><path d="M8 8.500l3 .5-1 2.500M11 6.500l2 2" stroke="#eee" fill="none" /></svg>
        </button>
        <span className="-mr-[14px] text-[13px]">160%</span>
      </div>
    </footer>
  );
}

/* ---------- taskbar ---------- */

const taskIcons: { name: string; art: ReactNode; active?: boolean }[] = [
  { name: "搜索", art: <circle cx="12" cy="10" r="8" fill="none" stroke="#fff" strokeWidth="2.500" /> },
  { name: "计算器", art: <><path d="M3 0h18v26H3z" fill="#737f88" /><path d="M5 2h14v4H5z" fill="#5fd6f5" /><path d="M5 8h4v4H5zM10 8h4v4h-4zM15 8h4v4h-4zM5 13h4v4H5zM10 13h4v4h-4z" fill="#dfe5ea" /><path d="M15 13h4v9h-4z" fill="#1d4f8c" /></> },
  { name: "浏览器", art: <><circle cx="12" cy="12" r="12" fill="#2aa8f0" /><path d="M12 0a12 12 0 0 1 12 12l-6 2-6-8z" fill="#f03cb4" /><path d="M0 11A12 12 0 0 1 12 0l4 6-9 5z" fill="#44d07c" /><path d="M24 12a12 12 0 0 1-8 11l-4-6 6-8z" fill="#f0363c" /><path d="M16 23A12 12 0 0 1 4 21l2-7 8 2z" fill="#ffb020" /><path d="M0 11q0 6 4 10l3-7-2-6z" fill="#8a3cf0" /><circle cx="12" cy="12" r="4" fill="#fff" /></> },
  { name: "相机", art: <><rect x="1" y="2" width="22" height="20" rx="1" fill="#f79a1c" /><path d="M3 3h5v2H3z" fill="#fbd08a" /><circle cx="13" cy="11" r="7" fill="#fff" /><circle cx="13" cy="11" r="5" fill="#2b62b8" /><circle cx="13" cy="11" r="2.500" fill="#8fb9f0" /></> },
  { name: "远程", art: <><circle cx="7" cy="12" r="6" fill="#0d5cb8" /><circle cx="19" cy="5" r="3.500" fill="#5aa9e0" /><circle cx="19" cy="19" r="4" fill="#3d8fd0" /></> },
  { name: "待办", art: <><rect width="24" height="24" rx="3" fill="#fff" /><path d="M3 8h11v4H9l-1 10-4-3 1-7H3z" fill="#1468f0" /><path d="M12 4h9v8l-3 1-1 9-4 2 1-14h-2z" fill="#15c8d8" /></> },
  { name: "云盘", art: <><rect width="24" height="24" rx="3" fill="#1283e4" /><circle cx="12" cy="13" r="8" fill="#fff" /><circle cx="12" cy="13" r="3.500" fill="#1283e4" /><path d="M9 2h3v5H9z" fill="#fff" /></> },
  { name: "同步", art: <><path d="M2 9Q4 1 12 1.500q6 .5 8 5.500l3-1-3 7-7-3 3-1q-1-3-4-4Q6 4 2 9z" fill="#26361a" /><path d="M12 1.500q6 .5 8 5.500l3-1-3 7-7-3 3-1q-1-3-4-4z" fill="#98c81e" /><path d="M1 16l5-6 5 7H8q1 4 4 5-8 1-8-6z" fill="#26a8c8" /></> },
  { name: "设计院", art: <><circle cx="12" cy="12" r="12" fill="#fff" /><circle cx="12" cy="12" r="11" fill="#15367f" /><path d="M3 7q6 1 7 14M20 3Q10 8 12 22M4 14q9-2 17-8M14 11q6-2 7 3t-7 4" fill="none" stroke="#fff" strokeWidth="2" /></> },
  { name: "主机", art: <><path d="M5 2l11-2v6l2 1v18H8L6 7z" fill="#e8e8e8" /><path d="M6 3l9-1.500M8 9h9M8 12h9" stroke="#333" strokeWidth="1.500" /></> },
  { name: "微信", art: <><circle cx="9" cy="9" r="9" fill="#3cc869" /><circle cx="17" cy="16" r="7.500" fill="#f0f0f0" /><circle cx="6" cy="7" r="1.200" fill="#1c5a30" /><circle cx="12" cy="7" r="1.200" fill="#1c5a30" /><circle cx="14.500" cy="14" r="1" fill="#777" /><circle cx="19.500" cy="14" r="1" fill="#777" /></> },
  { name: "矢量绘图", art: <><circle cx="12" cy="12" r="11" fill="#101810" stroke="#78c81e" strokeWidth="2" /><path d="M4 5l5-1 9 11-1 4-4-1z" fill="#eee" /><path d="M8 8l7 8" stroke="#222" strokeWidth="1.500" /></> },
  { name: "图像处理", art: <><rect x="1.500" y="1" width="21" height="23" rx="2" fill="#0a1c2b" stroke="#36b8ee" strokeWidth="1.500" /><text x="12" y="17" textAnchor="middle" fontSize="13" fontWeight="700" fill="#d8f0ff" fontFamily="Noto Sans">Ps</text></> },
  { name: "QQ", art: <><rect width="24" height="26" rx="3" fill="#fff" /><ellipse cx="12" cy="9" rx="6" ry="7" fill="#111" /><ellipse cx="12" cy="18" rx="8" ry="8" fill="#111" /><ellipse cx="10" cy="7" rx="1.300" ry="2" fill="#fff" /><ellipse cx="14" cy="7" rx="1.300" ry="2" fill="#fff" /><ellipse cx="12" cy="11" rx="4" ry="1.500" fill="#f6a81c" /><path d="M5 14q7 3 14 0v3q-7 3-14 0z" fill="#e8262e" /></> },
  { name: "xin", art: <><text x="10" y="17" textAnchor="middle" fontSize="15" fontStyle="italic" fill="#2f7cc0" fontFamily="Liberation Serif">xin</text><path d="M19 8q6 4 0 10-8 4-12 0" fill="none" stroke="#2f7cc0" /><circle cx="13" cy="6" r="1" fill="#e8913a" /></> },
  { name: "看图", art: <><circle cx="11" cy="11" r="9" fill="none" stroke="#2f8fe8" strokeWidth="3.500" /><path d="M17 9l2 5 5 2-5 2-2 5-2-5-3-2 3-2z" fill="#86c83a" /></> },
  { name: "PDF", art: <><path d="M1 1h22v26H1z" fill="#2a0a08" stroke="#e8261c" strokeWidth="1.500" /><path d="M5 20c2-4 6-9 6.500-15M11.500 5c0 6 3 9 8 10M6 19q6-4 12-4" fill="none" stroke="#fff" strokeWidth="1.300" /></> },
  { name: "QQ浏览器", art: <><circle cx="12" cy="12" r="9.500" fill="none" stroke="#2a96f4" strokeWidth="5" /><path d="M11 20a4 4 0 0 1 5-4 4 4 0 0 1 7 3v5H11z" fill="#fff" /></> },
  { name: "Excel", art: <><path d="M6 1h18v26H6z" fill="#21a366" /><path d="M15 1h9v7h-9z" fill="#33c481" /><path d="M6 8h9v10H6z" fill="#107c41" /><path d="M0 7h13v14H0z" fill="#0f6b39" /><text x="6.500" y="18" textAnchor="middle" fontSize="11" fontWeight="700" fill="#fff" fontFamily="Open Sans">X</text></> },
  { name: "Word", art: <><path d="M6 1h18v26H6z" fill="#2b7cd3" /><path d="M6 1h18v7H6z" fill="#41a5ee" /><path d="M0 7h13v14H0z" fill="#185abd" /><text x="6.500" y="18" textAnchor="middle" fontSize="11" fontWeight="700" fill="#fff" fontFamily="Open Sans">W</text></> },
  { name: "记事本", art: <><path d="M8 2l14-1-6 26H0z" fill="#7fb4c6" /><path d="M8 2l14-1-1 3-14 1z" fill="#e8f0f2" /><path d="M22 1l1 2-5 24h-2z" fill="#e6e2d0" /></> },
  { name: "投标工具", active: true, art: <><path d="M1 4q4 2 10 2 5 1 5 6l-3 4q-1-4-7-4 3-1 5-1-3-2-6-2 3-1 5-1-6-1-9-4z" fill="#e07818" /><path d="M9 17l4-2-4 9q-2-4-5-5z" fill="#d8600c" /><path d="M24 2q-6 2-7 9t-4 15h5l3-12q2-6 3-12z" fill="#128c4a" /></> },
  { name: "文件夹", art: <><path d="M1 3h9l2 3h11v20H1z" fill="#e8a820" /><path d="M1 7h22v19H1z" fill="#fbd568" /><path d="M6 16h14v10H6z" fill="#3c9ae0" /><path d="M10 20h6v6h-6z" fill="#fbd568" /></> },
];

function Taskbar() {
  return (
    <div className="flex h-[25px] shrink-0 overflow-hidden bg-linear-to-r from-[#22333d] via-[#26323a] to-[#1c2c34]">
      <button type="button" aria-label="开始" className="h-[25px] w-[22px] shrink-0">
        <svg width="22" height="25" viewBox="0 0 22 25"><path d="M0 12h5v7H0zM0 20h5v5H0z" fill="#fff" /></svg>
      </button>
      {taskIcons.map((t) => (
        <button key={t.name} type="button" aria-label={t.name} className={`flex h-[25px] w-[49px] shrink-0 justify-center overflow-hidden pt-2 ${t.active ? "bg-[#4a565e]" : ""}`}>
          <svg width="24" height="28" viewBox="0 0 24 28" className="shrink-0">{t.art}</svg>
        </button>
      ))}
      <time className="mr-[7px] ml-auto text-[12px] leading-[22px] text-white">7:58</time>
    </div>
  );
}

export default function App() {
  return (
    <div className={`flex h-screen flex-col overflow-hidden bg-[#e6e6e6] text-[12px] leading-[18px] ${UI}`}>
      <TitleArea />
      <Ribbon />
      <div className="flex min-h-0 grow overflow-hidden">
        <NavPane />
        <Editor />
      </div>
      <StatusBar />
      <Taskbar />
    </div>
  );
}
